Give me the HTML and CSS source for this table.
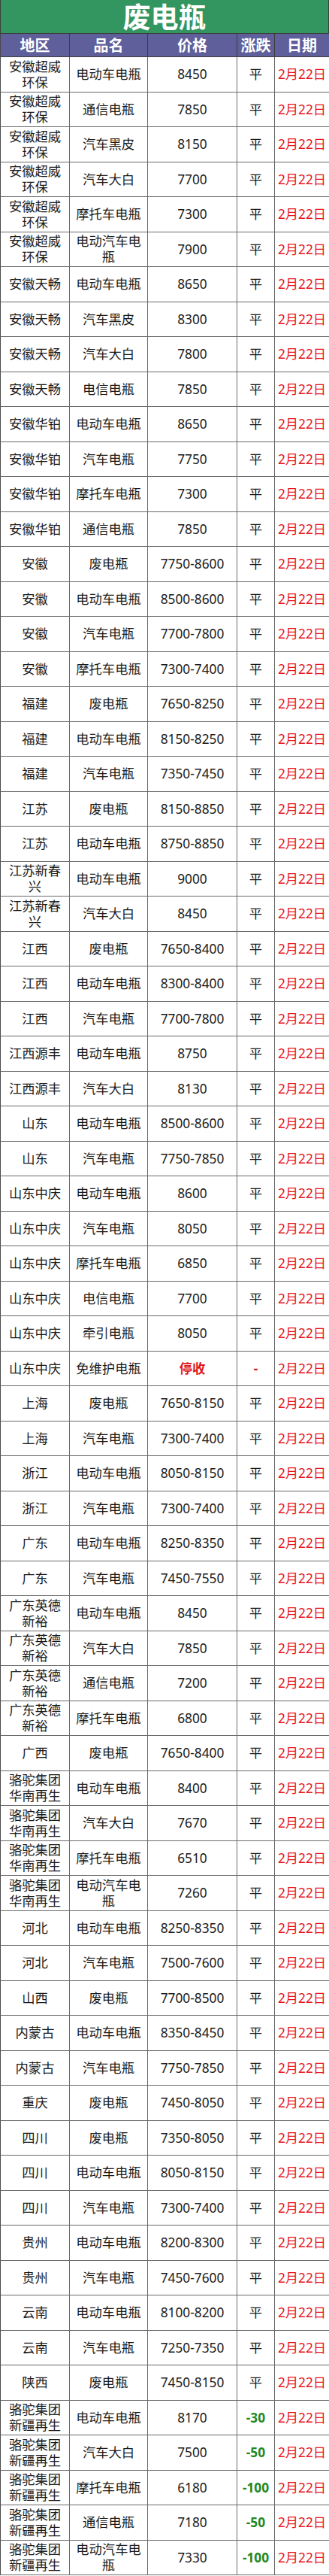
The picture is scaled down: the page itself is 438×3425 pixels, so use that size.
FILE: index.html
```html
<!DOCTYPE html>
<html lang="zh-CN">
<head>
<meta charset="utf-8">
<title>废电瓶</title>
<link rel="stylesheet" href="styles.css">
</head>
<body>
<div class="sheet">
  <div class="title">废电瓶</div>
  <div class="row head"><div>地区</div><div>品名</div><div>价格</div><div>涨跌</div><div>日期</div></div>

  <div class="row"><div>安徽超威环保</div><div>电动车电瓶</div><div>8450</div><div>平</div><div class="date">2月22日</div></div>
  <div class="row"><div>安徽超威环保</div><div>通信电瓶</div><div>7850</div><div>平</div><div class="date">2月22日</div></div>
  <div class="row"><div>安徽超威环保</div><div>汽车黑皮</div><div>8150</div><div>平</div><div class="date">2月22日</div></div>
  <div class="row"><div>安徽超威环保</div><div>汽车大白</div><div>7700</div><div>平</div><div class="date">2月22日</div></div>
  <div class="row"><div>安徽超威环保</div><div>摩托车电瓶</div><div>7300</div><div>平</div><div class="date">2月22日</div></div>
  <div class="row"><div>安徽超威环保</div><div>电动汽车电瓶</div><div>7900</div><div>平</div><div class="date">2月22日</div></div>
  <div class="row"><div>安徽天畅</div><div>电动车电瓶</div><div>8650</div><div>平</div><div class="date">2月22日</div></div>
  <div class="row"><div>安徽天畅</div><div>汽车黑皮</div><div>8300</div><div>平</div><div class="date">2月22日</div></div>
  <div class="row"><div>安徽天畅</div><div>汽车大白</div><div>7800</div><div>平</div><div class="date">2月22日</div></div>
  <div class="row"><div>安徽天畅</div><div>电信电瓶</div><div>7850</div><div>平</div><div class="date">2月22日</div></div>
  <div class="row"><div>安徽华铂</div><div>电动车电瓶</div><div>8650</div><div>平</div><div class="date">2月22日</div></div>
  <div class="row"><div>安徽华铂</div><div>汽车电瓶</div><div>7750</div><div>平</div><div class="date">2月22日</div></div>
  <div class="row"><div>安徽华铂</div><div>摩托车电瓶</div><div>7300</div><div>平</div><div class="date">2月22日</div></div>
  <div class="row"><div>安徽华铂</div><div>通信电瓶</div><div>7850</div><div>平</div><div class="date">2月22日</div></div>
  <div class="row"><div>安徽</div><div>废电瓶</div><div>7750-8600</div><div>平</div><div class="date">2月22日</div></div>
  <div class="row"><div>安徽</div><div>电动车电瓶</div><div>8500-8600</div><div>平</div><div class="date">2月22日</div></div>
  <div class="row"><div>安徽</div><div>汽车电瓶</div><div>7700-7800</div><div>平</div><div class="date">2月22日</div></div>
  <div class="row"><div>安徽</div><div>摩托车电瓶</div><div>7300-7400</div><div>平</div><div class="date">2月22日</div></div>
  <div class="row"><div>福建</div><div>废电瓶</div><div>7650-8250</div><div>平</div><div class="date">2月22日</div></div>
  <div class="row"><div>福建</div><div>电动车电瓶</div><div>8150-8250</div><div>平</div><div class="date">2月22日</div></div>
  <div class="row"><div>福建</div><div>汽车电瓶</div><div>7350-7450</div><div>平</div><div class="date">2月22日</div></div>
  <div class="row"><div>江苏</div><div>废电瓶</div><div>8150-8850</div><div>平</div><div class="date">2月22日</div></div>
  <div class="row"><div>江苏</div><div>电动车电瓶</div><div>8750-8850</div><div>平</div><div class="date">2月22日</div></div>
  <div class="row"><div>江苏新春兴</div><div>电动车电瓶</div><div>9000</div><div>平</div><div class="date">2月22日</div></div>
  <div class="row"><div>江苏新春兴</div><div>汽车大白</div><div>8450</div><div>平</div><div class="date">2月22日</div></div>
  <div class="row"><div>江西</div><div>废电瓶</div><div>7650-8400</div><div>平</div><div class="date">2月22日</div></div>
  <div class="row"><div>江西</div><div>电动车电瓶</div><div>8300-8400</div><div>平</div><div class="date">2月22日</div></div>
  <div class="row"><div>江西</div><div>汽车电瓶</div><div>7700-7800</div><div>平</div><div class="date">2月22日</div></div>
  <div class="row"><div>江西源丰</div><div>电动车电瓶</div><div>8750</div><div>平</div><div class="date">2月22日</div></div>
  <div class="row"><div>江西源丰</div><div>汽车大白</div><div>8130</div><div>平</div><div class="date">2月22日</div></div>
  <div class="row"><div>山东</div><div>电动车电瓶</div><div>8500-8600</div><div>平</div><div class="date">2月22日</div></div>
  <div class="row"><div>山东</div><div>汽车电瓶</div><div>7750-7850</div><div>平</div><div class="date">2月22日</div></div>
  <div class="row"><div>山东中庆</div><div>电动车电瓶</div><div>8600</div><div>平</div><div class="date">2月22日</div></div>
  <div class="row"><div>山东中庆</div><div>汽车电瓶</div><div>8050</div><div>平</div><div class="date">2月22日</div></div>
  <div class="row"><div>山东中庆</div><div>摩托车电瓶</div><div>6850</div><div>平</div><div class="date">2月22日</div></div>
  <div class="row"><div>山东中庆</div><div>电信电瓶</div><div>7700</div><div>平</div><div class="date">2月22日</div></div>
  <div class="row"><div>山东中庆</div><div>牵引电瓶</div><div>8050</div><div>平</div><div class="date">2月22日</div></div>
  <div class="row"><div>山东中庆</div><div>免维护电瓶</div><div class="stop">停收</div><div class="stop">-</div><div class="date">2月22日</div></div>
  <div class="row"><div>上海</div><div>废电瓶</div><div>7650-8150</div><div>平</div><div class="date">2月22日</div></div>
  <div class="row"><div>上海</div><div>汽车电瓶</div><div>7300-7400</div><div>平</div><div class="date">2月22日</div></div>
  <div class="row"><div>浙江</div><div>电动车电瓶</div><div>8050-8150</div><div>平</div><div class="date">2月22日</div></div>
  <div class="row"><div>浙江</div><div>汽车电瓶</div><div>7300-7400</div><div>平</div><div class="date">2月22日</div></div>
  <div class="row"><div>广东</div><div>电动车电瓶</div><div>8250-8350</div><div>平</div><div class="date">2月22日</div></div>
  <div class="row"><div>广东</div><div>汽车电瓶</div><div>7450-7550</div><div>平</div><div class="date">2月22日</div></div>
  <div class="row"><div>广东英德新裕</div><div>电动车电瓶</div><div>8450</div><div>平</div><div class="date">2月22日</div></div>
  <div class="row"><div>广东英德新裕</div><div>汽车大白</div><div>7850</div><div>平</div><div class="date">2月22日</div></div>
  <div class="row"><div>广东英德新裕</div><div>通信电瓶</div><div>7200</div><div>平</div><div class="date">2月22日</div></div>
  <div class="row"><div>广东英德新裕</div><div>摩托车电瓶</div><div>6800</div><div>平</div><div class="date">2月22日</div></div>
  <div class="row"><div>广西</div><div>废电瓶</div><div>7650-8400</div><div>平</div><div class="date">2月22日</div></div>
  <div class="row"><div>骆驼集团华南再生</div><div>电动车电瓶</div><div>8400</div><div>平</div><div class="date">2月22日</div></div>
  <div class="row"><div>骆驼集团华南再生</div><div>汽车大白</div><div>7670</div><div>平</div><div class="date">2月22日</div></div>
  <div class="row"><div>骆驼集团华南再生</div><div>摩托车电瓶</div><div>6510</div><div>平</div><div class="date">2月22日</div></div>
  <div class="row"><div>骆驼集团华南再生</div><div>电动汽车电瓶</div><div>7260</div><div>平</div><div class="date">2月22日</div></div>
  <div class="row"><div>河北</div><div>电动车电瓶</div><div>8250-8350</div><div>平</div><div class="date">2月22日</div></div>
  <div class="row"><div>河北</div><div>汽车电瓶</div><div>7500-7600</div><div>平</div><div class="date">2月22日</div></div>
  <div class="row"><div>山西</div><div>废电瓶</div><div>7700-8500</div><div>平</div><div class="date">2月22日</div></div>
  <div class="row"><div>内蒙古</div><div>电动车电瓶</div><div>8350-8450</div><div>平</div><div class="date">2月22日</div></div>
  <div class="row"><div>内蒙古</div><div>汽车电瓶</div><div>7750-7850</div><div>平</div><div class="date">2月22日</div></div>
  <div class="row"><div>重庆</div><div>废电瓶</div><div>7450-8050</div><div>平</div><div class="date">2月22日</div></div>
  <div class="row"><div>四川</div><div>废电瓶</div><div>7350-8050</div><div>平</div><div class="date">2月22日</div></div>
  <div class="row"><div>四川</div><div>电动车电瓶</div><div>8050-8150</div><div>平</div><div class="date">2月22日</div></div>
  <div class="row"><div>四川</div><div>汽车电瓶</div><div>7300-7400</div><div>平</div><div class="date">2月22日</div></div>
  <div class="row"><div>贵州</div><div>电动车电瓶</div><div>8200-8300</div><div>平</div><div class="date">2月22日</div></div>
  <div class="row"><div>贵州</div><div>汽车电瓶</div><div>7450-7600</div><div>平</div><div class="date">2月22日</div></div>
  <div class="row"><div>云南</div><div>电动车电瓶</div><div>8100-8200</div><div>平</div><div class="date">2月22日</div></div>
  <div class="row"><div>云南</div><div>汽车电瓶</div><div>7250-7350</div><div>平</div><div class="date">2月22日</div></div>
  <div class="row"><div>陕西</div><div>废电瓶</div><div>7450-8150</div><div>平</div><div class="date">2月22日</div></div>
  <div class="row"><div>骆驼集团新疆再生</div><div>电动车电瓶</div><div>8170</div><div class="down">-30</div><div class="date">2月22日</div></div>
  <div class="row"><div>骆驼集团新疆再生</div><div>汽车大白</div><div>7500</div><div class="down">-50</div><div class="date">2月22日</div></div>
  <div class="row"><div>骆驼集团新疆再生</div><div>摩托车电瓶</div><div>6180</div><div class="down">-100</div><div class="date">2月22日</div></div>
  <div class="row"><div>骆驼集团新疆再生</div><div>通信电瓶</div><div>7180</div><div class="down">-50</div><div class="date">2月22日</div></div>
  <div class="row"><div>骆驼集团新疆再生</div><div>电动汽车电瓶</div><div>7330</div><div class="down">-100</div><div class="date">2月22日</div></div>
</div>
</body>
</html>
```
FILE: styles.css
```css
html, body {
  margin: 0;
  padding: 0;
  background: #ffffff;
}

.sheet {
  width: 438px;
  font-family: "Noto Sans", "Noto Sans CJK SC", sans-serif;
  color: #1a1a1a;
}

.title {
  height: 45px;
  box-sizing: border-box;
  background: #33955f;
  color: #ffffff;
  font-weight: 700;
  font-size: 37px;
  line-height: 45px;
  text-align: center;
  border-bottom: 1px solid #3d3d3d;
  border-left: 1px solid #3d3d3d;
  border-right: 1px solid #3d3d3d;
}

.row {
  display: grid;
  grid-template-columns: 92px 104px 119px 50px 73px;
  height: 46.5px;
  box-sizing: border-box;
  border-bottom: 1px solid #6a6a6a;
  border-left: 1px solid #4a4a4a;
}

.row > div {
  display: flex;
  align-items: center;
  justify-content: center;
  text-align: center;
  border-right: 1px solid #6a6a6a;
  font-size: 17.3px;
  line-height: 21px;
  padding: 0 1px;
  overflow: hidden;
}

.row > div:nth-child(1) {
  padding: 0 6px;
}

.row > div:nth-child(2) {
  padding: 0 4px;
}

.row.head {
  height: 31px;
  background: #5f5f9b;
  color: #ffffff;
  border-bottom: 1px solid #3d3d3d;
}

.row.head > div {
  font-size: 20px;
  font-weight: 700;
  border-right-color: #3d3d3d;
}

.date {
  color: #e8141c;
  white-space: nowrap;
}

.stop {
  color: #e0141c;
  font-weight: 700;
}

.down {
  color: #1f8a1f;
  font-weight: 700;
}
```
